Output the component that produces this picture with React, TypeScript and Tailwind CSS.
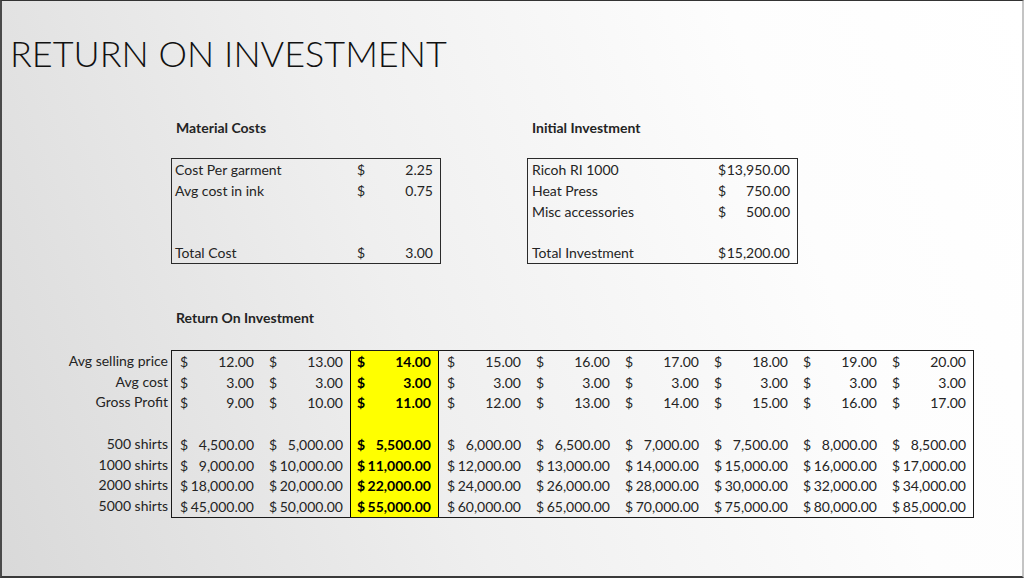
const materialRows: [string, string, string][] = [
  ["Cost Per garment", "$", "2.25"],
  ["Avg cost in ink", "$", "0.75"],
  ["", "", ""],
  ["", "", ""],
  ["Total Cost", "$", "3.00"],
];

const investmentRows: [string, string, string][] = [
  ["Ricoh RI 1000", "$", "13,950.00"],
  ["Heat Press", "$", "750.00"],
  ["Misc accessories", "$", "500.00"],
  ["", "", ""],
  ["Total Investment", "$", "15,200.00"],
];

const rowLabels = [
  "Avg selling price",
  "Avg cost",
  "Gross Profit",
  "",
  "500 shirts",
  "1000 shirts",
  "2000 shirts",
  "5000 shirts",
];

const fmt = (n: number) =>
  n.toLocaleString("en-US", { minimumFractionDigits: 2, maximumFractionDigits: 2 });

const prices = [12, 13, 14, 15, 16, 17, 18, 19, 20];
const cost = 3;

function columnValues(price: number): string[] {
  const profit = price - cost;
  return [
    fmt(price),
    fmt(cost),
    fmt(profit),
    "",
    fmt(profit * 500),
    fmt(profit * 1000),
    fmt(profit * 2000),
    fmt(profit * 5000),
  ];
}

function SmallTable({
  rows,
  labelWidth,
  padLeft,
}: {
  rows: [string, string, string][];
  labelWidth: string;
  padLeft: string;
}) {
  return (
    <div className="border border-[#2a2a2a]">
      {rows.map(([label, sign, value], i) => (
        <div key={i} className={`flex h-[20.8px] items-center pr-[7px] ${padLeft}`}>
          <span className={`shrink-0 ${labelWidth}`}>{label}</span>
          <span className="flex flex-1 justify-between">
            <span>{sign}</span>
            <span>{value}</span>
          </span>
        </div>
      ))}
    </div>
  );
}

export default function App() {
  return (
    <div
      className="h-[578px] w-[1024px] overflow-hidden border-t border-l-2 border-r-2 border-b-2 border-t-[#333] border-l-[#4a4a4a] border-r-[#c4c4c4] border-b-[#3a3a3a] bg-[linear-gradient(70deg,#d9d9d9_0%,#efefef_40%,#fdfdfd_76%,#ffffff_100%)] text-[#242424]"
      style={{ fontFamily: "Lato, 'Noto Sans', sans-serif" }}
    >
      <h1 className="pl-[8px] pt-[34px] text-[36px] font-light leading-none text-[#111]">
        RETURN ON INVESTMENT
      </h1>

      <div className="mt-[47px] flex text-[14px]">
        <div className="ml-[169px] w-[270px]">
          <div className="pl-[5px] font-bold leading-[20px]">Material Costs</div>
          <div className="mt-[20px]">
            <SmallTable rows={materialRows} labelWidth="w-[182px]" padLeft="pl-[3px]" />
          </div>
        </div>
        <div className="ml-[86px] w-[271px]">
          <div className="pl-[5px] font-bold leading-[20px]">Initial Investment</div>
          <div className="mt-[20px]">
            <SmallTable rows={investmentRows} labelWidth="w-[186px]" padLeft="pl-[4px]" />
          </div>
        </div>
      </div>

      <div className="mt-[44px] text-[14px]">
        <div className="ml-[174px] font-bold leading-[20px]">Return On Investment</div>
        <div className="mt-[22px] flex">
          <div className="w-[167px] shrink-0 pr-[1px] text-right">
            {rowLabels.map((l, i) => (
              <div key={i} className="flex h-[20.75px] items-center justify-end">
                {l}
              </div>
            ))}
          </div>
          <div className="ml-[2px] flex border border-[#1a1a1a]">
            {prices.map((p) => {
              const hi = p === 14;
              return (
                <div
                  key={p}
                  className={
                    hi
                      ? "w-[89px] border-x border-black bg-[#ffff00] font-bold text-black"
                      : "w-[89px]"
                  }
                >
                  {columnValues(p).map((v, i) => (
                    <div
                      key={i}
                      className={`flex h-[20.75px] items-center justify-between pr-[7px] ${hi ? "pl-[6px]" : "pl-[8px]"}`}
                    >
                      <span>{v ? "$" : ""}</span>
                      <span>{v}</span>
                    </div>
                  ))}
                </div>
              );
            })}
          </div>
        </div>
      </div>
    </div>
  );
}
